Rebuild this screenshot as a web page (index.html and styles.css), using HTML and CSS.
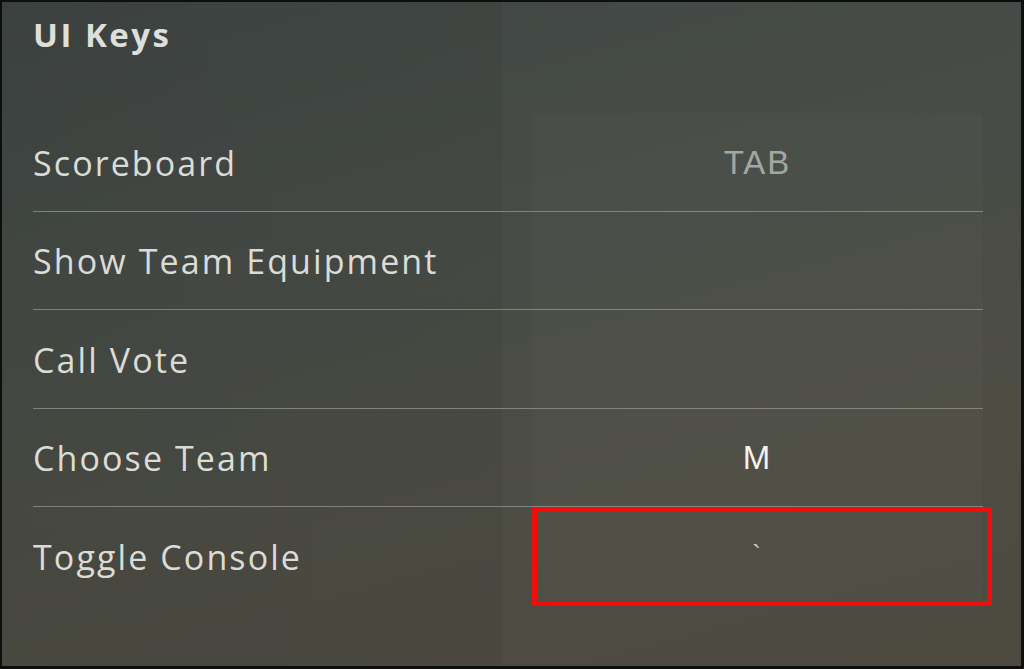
FILE: index.html
```html
<!DOCTYPE html>
<html>
<head>
<meta charset="utf-8">
<link rel="stylesheet" href="styles.css">
</head>
<body>
<div class="frame">
  <h1 class="title">UI Keys</h1>
  <div class="list">
    <div class="row"><div class="label">Scoreboard</div><div class="value value-dim">TAB</div></div>
    <div class="row"><div class="label">Show Team Equipment</div><div class="value"></div></div>
    <div class="row"><div class="label">Call Vote</div><div class="value"></div></div>
    <div class="row"><div class="label">Choose Team</div><div class="value">M</div></div>
    <div class="row row-last"><div class="label">Toggle Console</div><div class="value value-tick">`<span class="highlight"></span></div></div>
  </div>
</div>
</body>
</html>
```
FILE: styles.css
```css
html, body {
  margin: 0;
  padding: 0;
  background: #0e0e0e;
}
body {
  width: 1024px;
  height: 669px;
  overflow: hidden;
}
.frame {
  box-sizing: border-box;
  margin: 2px 3px 0 2px;
  width: 1019px;
  height: 664px;
  padding: 0 0 0 31px;
  background:
    linear-gradient(to right, rgba(0,0,0,0.07) 0, rgba(0,0,0,0.05) 500px, transparent 500px),
    linear-gradient(165deg, #3f4644 0%, #464b47 30%, #4d4d44 70%, #4d4a40 100%);
  font-family: "Open Sans", "Noto Sans", sans-serif;
  color: #dcdcd6;
}
.title {
  margin: 0;
  height: 111px;
  box-sizing: border-box;
  padding-top: 11px;
  font-size: 33px;
  font-weight: 700;
  letter-spacing: 2.5px;
  line-height: 44px;
  color: #dedfdb;
}
.list {
  width: 950px;
}
.row {
  box-sizing: border-box;
  height: 98.5px;
  display: grid;
  grid-template-columns: 499px 451px;
  border-bottom: 1px solid rgba(200, 205, 198, 0.45);
}
.row-last {
  border-bottom: none;
}
.label {
  display: flex;
  align-items: center;
  font-size: 34px;
  letter-spacing: 2.1px;
  padding-top: 2px;
}
.value {
  position: relative;
  display: flex;
  align-items: center;
  justify-content: center;
  background: rgba(255, 255, 255, 0.02);
  font-family: "Liberation Sans", Arial, sans-serif;
  font-size: 33px;
  letter-spacing: 2px;
  color: #f2f2ee;
  padding-top: 2px;
  box-sizing: border-box;
}
.row:first-child .value {
  border-radius: 4px 4px 0 0;
}
.row-last .value {
  border-radius: 0 0 4px 4px;
}
.value-dim {
  color: #a3a7a2;
}
.value-tick {
  font-size: 26px;
  color: #c8c8c2;
  padding-top: 0;
  padding-bottom: 4px;
}
.highlight {
  position: absolute;
  left: 0;
  top: 0;
  width: 460px;
  height: 99px;
  box-sizing: border-box;
  border: 5px solid #f20d0d;
}
```
